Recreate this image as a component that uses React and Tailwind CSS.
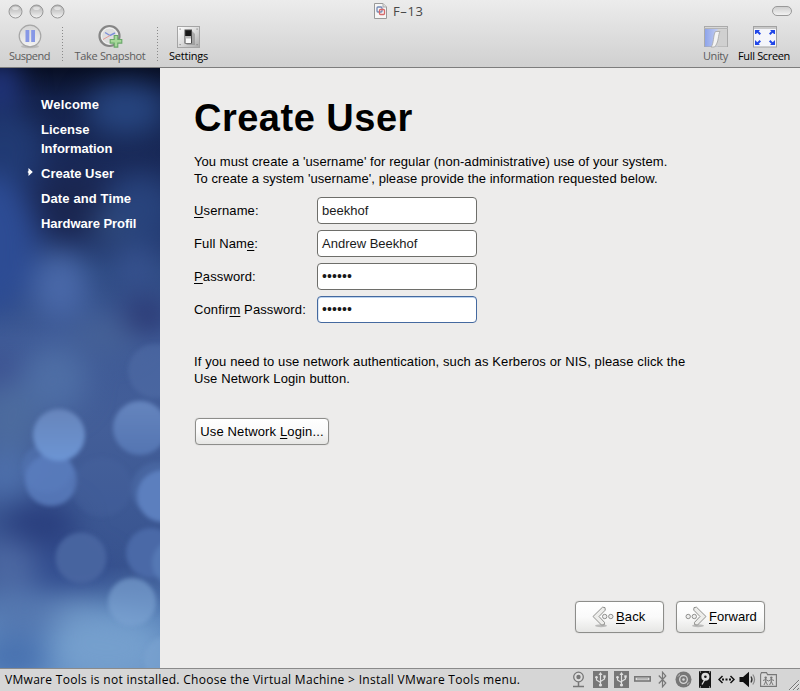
const mac = "font-['Open_Sans','Noto_Sans',sans-serif]";
const gtk = "font-['Liberation_Sans',Arial,sans-serif]";

function WindowButton() {
  return (
    <svg className="h-[15px] w-[15px]" viewBox="0 0 15 15">
      <circle cx="7.5" cy="7.5" r="6.5" fill="url(#lampFill)" stroke="#989898" strokeWidth="1" />
      <ellipse cx="7.5" cy="4.2" rx="3.4" ry="1.8" fill="#fff" opacity=".5" />
    </svg>
  );
}

function ToolItem({ label, dim, width, spacing, children }) {
  return (
    <div className={`flex shrink-0 flex-col items-center ${width}`}>
      <div className="flex h-[25px] items-center justify-center">{children}</div>
      <span className={`text-[11px] leading-[14px] font-medium whitespace-nowrap ${spacing} ${dim ? "text-[#5c5c5c]" : "text-black"}`}>
        {label}
      </span>
    </div>
  );
}

function Separator() {
  return <div className="mt-[3px] h-[34px] w-px shrink-0 bg-[repeating-linear-gradient(to_bottom,#8a8a8a_0_1px,transparent_1px_3px)]" />;
}

function PauseIcon() {
  return (
    <svg className="h-[25px] w-[26px]" viewBox="0 0 26 25">
      <ellipse cx="13" cy="22.5" rx="9" ry="1.8" fill="#bbb" />
      <circle cx="13" cy="12" r="10.8" fill="url(#pauseFill)" stroke="#a6a6a6" strokeWidth="1.2" />
      <rect x="8.5" y="6" width="3.8" height="12" fill="#8798e6" />
      <rect x="14.2" y="6" width="3.8" height="12" fill="#8798e6" />
    </svg>
  );
}

function SnapshotIcon() {
  return (
    <svg className="h-[25px] w-[26px]" viewBox="0 0 26 25">
      <circle cx="12.500" cy="12" r="10" fill="#dedede" stroke="#858585" strokeWidth="2.2" />
      <circle cx="12.500" cy="12" r="8" fill="none" stroke="#f4f4f4" strokeWidth="1" />
      <path d="M8 8.500l5 3 5-2.500" fill="none" stroke="#7d8fd8" strokeWidth="1.4" />
      <path d="M6 15.500l7-4" stroke="#e29a98" />
      <path d="M17.200 11.500h3.600v4h4v3.600h-4v4h-3.600v-4h-4v-3.600h4z" fill="#a7d89a" stroke="#68a868" strokeWidth="1.1" />
    </svg>
  );
}

function SwitchIcon() {
  return (
    <svg className="h-[22px] w-[23px]" viewBox="0 0 23 22">
      <rect x=".5" y=".5" width="22" height="21" fill="url(#plate)" stroke="#a4a4a4" />
      <g fill="#888">
        <rect x="2.500" y="2.500" width="1.200" height="1.200" /><rect x="19.500" y="2.500" width="1.200" height="1.200" />
        <rect x="2.500" y="18" width="1.200" height="1.200" /><rect x="19.500" y="18" width="1.200" height="1.200" />
      </g>
      <path d="M15 5l3 3v11H10l-2-2z" fill="#8a8a8a" opacity=".6" />
      <rect x="7.500" y="3.500" width="7.500" height="14" fill="#4a4a4a" />
      <rect x="8.500" y="4.500" width="5.500" height="5.500" fill="#161616" />
      <rect x="8.500" y="10" width="5.500" height="7" fill="#fafafa" />
      <rect x="8.500" y="10" width="5.500" height="2.500" fill="#b8b8b8" />
    </svg>
  );
}

function UnityIcon() {
  return (
    <svg className="h-[22px] w-[24px]" viewBox="0 0 24 22">
      <rect x=".5" y=".5" width="23" height="20" fill="#d7d7d7" stroke="#aaa" />
      <rect x="1" y="3" width="13" height="17.5" fill="url(#unityBlue)" />
      <path d="M0 2.5h24" stroke="#b4b4b4" />
      <path d="M13.5 3.5h9.5v17H9c3-2 2.5-13 4.500-17z" fill="#d0d0d0" />
      <path d="M11.500 5.500h4.500c-2 3-1 11-5.500 15.500H7c3-3 2-12 4.500-15.500z" fill="#f4f4f4" stroke="#a5a5a5" strokeWidth=".8" />
    </svg>
  );
}

function FullScreenIcon() {
  return (
    <svg className="h-[22px] w-[24px] translate-x-px" viewBox="0 0 24 22">
      <rect x=".5" y=".5" width="23" height="20.500" fill="#f4f5fa" stroke="#a2a2a2" />
      <rect x="1" y="1" width="22" height="2" fill="#c9c9c9" />
      <g fill="#2147e8">
        <path d="M2 4h5L5.700 5.300 8 7.600 6.600 9 4.300 6.700 3 8H2z" />
        <path d="M22 4h-5l1.300 1.300L16 7.600 17.400 9l2.300-2.300L21 8h1z" />
        <path d="M2 19h5l-1.300-1.300L8 15.400 6.600 14l-2.300 2.300L2 14z" />
        <path d="M22 19h-5l1.300-1.300-2.300-2.300 1.400-1.400 2.300 2.300L22 14z" />
      </g>
    </svg>
  );
}

function TitleBar() {
  return (
    <header className={`flex h-[68px] shrink-0 flex-col border-b border-[#7d7d7d] bg-linear-to-b from-[#ececec] to-[#d0d0d0] ${mac}`}>
      <div className="grid h-[24px] shrink-0 grid-cols-[1fr_auto_1fr] items-start pr-[8px] pl-[7.500px]">
        <div className="flex gap-[6px] pt-[3.500px]">
          <WindowButton />
          <WindowButton />
          <WindowButton />
        </div>
        <div className="flex items-start gap-[6px] pt-[3px] pr-[2px]">
          <svg className="h-[16px] w-[13px]" viewBox="0 0 13 16">
            <path d="M.5.5h8.500l3.500 3.500v11.500H.5z" fill="#f6f6f6" stroke="#999" />
            <path d="M9 .5v3.500h3.500" fill="#ddd" stroke="#aaa" />
            <rect x="3" y="4" width="5" height="5" rx="1" fill="none" stroke="#7289b5" strokeWidth="1.300" />
            <rect x="5.500" y="6.500" width="5" height="5" rx="1" fill="none" stroke="#d5696a" strokeWidth="1.300" />
          </svg>
          <span className="text-[13px] leading-[16px] tracking-[0.6px] text-[#484848]">F–13</span>
        </div>
        <div className="mt-[6px] h-[10px] w-[20px] justify-self-end rounded-full border border-[#999] bg-linear-to-b from-[#cfcfcf] to-[#f2f2f2]" />
      </div>
      <div className="flex">
        <ToolItem label="Suspend" dim width="w-[59px]" spacing="tracking-[-0.5px]"><PauseIcon /></ToolItem>
        <div className="w-[3px]" />
        <Separator />
        <ToolItem label="Take Snapshot" dim width="w-[94px]" spacing="tracking-[-0.32px]"><SnapshotIcon /></ToolItem>
        <Separator />
        <ToolItem label="Settings" width="w-[61px]" spacing="tracking-[-0.2px]"><SwitchIcon /></ToolItem>
        <div className="grow" />
        <ToolItem label="Unity" dim width="w-[45px]" spacing="tracking-[-0.4px]"><UnityIcon /></ToolItem>
        <ToolItem label="Full Screen" width="w-[52px]" spacing="tracking-[-0.35px]"><FullScreenIcon /></ToolItem>
        <div className="w-[10px]" />
      </div>
    </header>
  );
}

function Backdrop() {
  return (
    <svg className="absolute inset-0 h-[600px] w-[160px]" viewBox="0 68 160 600" preserveAspectRatio="none">
      <rect y="68" width="160" height="600" fill="url(#night)" />
      <g filter="url(#haze)">
        <ellipse cx="0" cy="85" rx="22" ry="24" fill="#22367f" />
        <ellipse cx="126" cy="110" rx="40" ry="26" fill="#27457f" />
        <ellipse cx="5" cy="150" rx="40" ry="40" fill="#233f7a" opacity=".8" />
        <ellipse cx="75" cy="205" rx="38" ry="34" fill="#1a2650" />
        <ellipse cx="-8" cy="245" rx="44" ry="70" fill="#2d4c94" />
        <ellipse cx="140" cy="210" rx="36" ry="36" fill="#28437c" />
        <ellipse cx="110" cy="225" rx="20" ry="18" fill="#2f4a7c" />
        <ellipse cx="145" cy="316" rx="25" ry="17" fill="#2b3873" />
        <ellipse cx="60" cy="287" rx="28" ry="34" fill="#4968a8" />
        <ellipse cx="136" cy="268" rx="20" ry="22" fill="#37528f" />
        <ellipse cx="105" cy="335" rx="32" ry="18" fill="#456196" />
        <ellipse cx="55" cy="380" rx="32" ry="34" fill="#4e6ea5" />
        <ellipse cx="0" cy="370" rx="16" ry="16" fill="#3c5090" />
        <ellipse cx="10" cy="420" rx="30" ry="38" fill="#4c6b9e" />
        <ellipse cx="5" cy="475" rx="30" ry="24" fill="#4d6fab" />
        <ellipse cx="40" cy="525" rx="38" ry="24" fill="#2a3f7e" />
        <ellipse cx="60" cy="570" rx="50" ry="20" fill="#324d8f" />
        <ellipse cx="8" cy="565" rx="30" ry="26" fill="#4c68a2" />
        <ellipse cx="25" cy="612" rx="38" ry="22" fill="#5578b0" />
        <ellipse cx="75" cy="612" rx="26" ry="16" fill="#668bbd" />
        <ellipse cx="108" cy="648" rx="58" ry="36" fill="#759fcd" />
        <ellipse cx="14" cy="658" rx="36" ry="22" fill="#4871af" />
      </g>
      <g filter="url(#edge)">
        <circle cx="155" cy="371" r="27" fill="#5571aa" opacity=".45" />
        <circle cx="47" cy="468" r="25" fill="#5a7dbe" opacity=".4" />
        <circle cx="51" cy="480" r="26" fill="#5b7ebf" opacity=".8" />
        <circle cx="59" cy="435" r="26" fill="url(#orb)" />
        <circle cx="140" cy="428" r="27" fill="url(#orbSoft)" />
        <circle cx="158" cy="489" r="27" fill="#5677b4" opacity=".35" />
        <circle cx="163" cy="496" r="26" fill="#5c7fbe" />
        <circle cx="102" cy="487" r="30" fill="#4a68a5" opacity=".25" />
        <circle cx="81" cy="558" r="25.500" fill="#4965a0" opacity=".95" />
        <circle cx="151" cy="553" r="25" fill="#4a69a7" />
        <circle cx="176" cy="563" r="24" fill="#577cb8" opacity=".8" />
        <circle cx="132" cy="602" r="24" fill="#7ba2d1" opacity=".65" />
        <circle cx="168" cy="660" r="24" fill="#7ba3d0" opacity=".6" />
      </g>
    </svg>
  );
}

function Sidebar() {
  return (
    <aside className="relative w-[160px] shrink-0 overflow-hidden">
      <Backdrop />
      <nav className={`relative flex w-[150px] flex-col gap-[6px] pt-[27px] pl-[27px] text-[13px] leading-[19px] font-bold whitespace-nowrap text-white ${gtk}`}>
        <div className="pl-[14px] tracking-[0.2px]">Welcome</div>
        <div className="pl-[14px] tracking-[0px]">License<br />Information</div>
        <div className="flex items-center tracking-[0px]">
          <svg className="mr-[8px] h-[8px] w-[6px] -translate-y-[2px]" viewBox="0 0 6 8"><path d="M1.500 0L5.800 4 1.500 8V5L.5 4l1-1z" fill="#fff" /></svg>
          Create User
        </div>
        <div className="pl-[14px] tracking-[0.12px]">Date and Time</div>
        <div className="pl-[14px] tracking-[-0.05px]">Hardware Profil</div>
      </nav>
    </aside>
  );
}

function K({ children }) {
  return <span className="underline decoration-1 underline-offset-2">{children}</span>;
}

function Field({ label, value, focus, secret }) {
  return (
    <div className="flex h-[27px] items-center">
      <div className="w-[123px] tracking-[0.12px] whitespace-nowrap">{label}</div>
      <div
        className={`flex h-[27px] w-[160px] items-center rounded-[4px] border bg-white pl-[4px] text-[#1a1a1a] ${
          focus ? "border-[#44699f] shadow-[inset_0_1px_0_#bdd3ee,inset_1px_0_0_#dce8f5]" : "border-[#6e6e6a]"
        }`}
      >
        {secret ? (
          <span className="text-[14px] tracking-[0.1px]">••••••</span>
        ) : (
          <span>{value}</span>
        )}
      </div>
    </div>
  );
}

const buttonLook = "flex items-center rounded-[4px] border border-[#8d8d8a] bg-linear-to-b from-white via-[#fafafa] to-[#e6e6e4] whitespace-nowrap shadow-[0_0_1px_#aaa]";

function Chevrons({ flip }) {
  return (
    <svg className={`h-[22px] w-[22px] shrink-0 ${flip ? "-scale-x-100" : ""}`} viewBox="0 0 22 22">
      <ellipse cx="9" cy="19.800" rx="6" ry="1.500" fill="#999" opacity=".6" />
      <path d="M10.500 1.200L1 10.500l8.500 8.500 2.800-.3.200-2.300-5.500-5.900 6.300-6.400-.3-2.500z" fill="#ededeb" stroke="#858582" strokeWidth=".9" strokeLinejoin="round" />
      <circle cx="12.700" cy="10.500" r="2.200" fill="#eee" stroke="#858582" strokeWidth=".9" />
      <circle cx="18.800" cy="10.500" r="2.200" fill="#eee" stroke="#858582" strokeWidth=".9" />
    </svg>
  );
}

function Content() {
  return (
    <main className={`flex grow flex-col bg-[#edeceb] pr-[35px] pl-[34px] text-[13px] leading-[17px] text-black ${gtk}`}>
      <h1 className="mt-[27px] text-[38px] leading-[46px] font-bold tracking-[0.5px]">Create User</h1>
      <p className="mt-[12px] tracking-[0.062px] whitespace-nowrap">
        You must create a 'username' for regular (non-administrative) use of your system.
        <br />
        To create a system 'username', please provide the information requested below.
      </p>
      <div className="mt-[10px] flex flex-col gap-[6px]">
        <Field label={<><K>U</K>sername:</>} value="beekhof" />
        <Field label={<>Full Nam<K>e</K>:</>} value="Andrew Beekhof" />
        <Field label={<><K>P</K>assword:</>} secret />
        <Field label={<>Confir<K>m</K> Password:</>} secret focus />
      </div>
      <p className="mt-[30px] tracking-[0.11px] whitespace-nowrap">
        If you need to use network authentication, such as Kerberos or NIS, please click the
        <br />
        Use Network Login button.
      </p>
      <button className={`mt-[31px] ml-px h-[27px] w-[134px] justify-center tracking-[0.14px] ${buttonLook}`}>
        <span>Use Network <K>L</K>ogin...</span>
      </button>
      <div className="mt-auto mb-[35px] flex justify-end gap-[12px]">
        <button className={`h-[32px] w-[89px] gap-[2px] pl-[16px] ${buttonLook}`}>
          <Chevrons />
          <span className="pb-[2px] tracking-[0.14px]"><K>B</K>ack</span>
        </button>
        <button className={`h-[32px] w-[89px] gap-[2px] pl-[8px] ${buttonLook}`}>
          <Chevrons flip />
          <span className="pb-[2px]"><K>F</K>orward</span>
        </button>
      </div>
    </main>
  );
}

function UsbIcon() {
  return (
    <svg className="h-[17px] w-[15px]" viewBox="0 0 15 17">
      <rect width="15" height="17" fill="#777" />
      <g fill="none" stroke="#e0e0e0" strokeWidth="1.200">
        <path d="M7.500 2.500v11M3.500 6.500v2.500l4 2.500M11.500 5.500v2.500l-4 2.500" />
      </g>
      <path d="M7.500 1l2 3h-4z" fill="#e0e0e0" />
      <circle cx="7.500" cy="14" r="1.600" fill="#e0e0e0" />
      <circle cx="3.500" cy="6.200" r="1.300" fill="#e0e0e0" />
      <rect x="10.300" y="4.300" width="2.400" height="2.400" fill="#e0e0e0" />
    </svg>
  );
}

function StatusBar() {
  return (
    <footer className={`flex h-[23px] shrink-0 items-center border-t border-[#8a8a8a] bg-[#d6d6d6] pl-[5px] ${mac}`}>
      <span className="w-[565px] text-[12px] leading-[16px] font-medium tracking-[0.3px] whitespace-nowrap text-black">
        VMware Tools is not installed. Choose the Virtual Machine &gt; Install VMware Tools menu.
      </span>
      <div className="flex -translate-y-px items-center">
        <svg className="ml-[2px] h-[17px] w-[13px]" viewBox="0 0 13 17">
          <circle cx="6.500" cy="6" r="4.800" fill="#ddd" stroke="#777" strokeWidth="1.300" />
          <circle cx="6.500" cy="6" r="2.200" fill="#777" />
          <path d="M6.500 11v4M1 15.500h11" stroke="#777" strokeWidth="1.500" />
        </svg>
        <span className="w-[8px]" />
        <UsbIcon />
        <span className="w-[6px]" />
        <UsbIcon />
        <svg className="ml-[5px] h-[6px] w-[17px]" viewBox="0 0 17 6">
          <rect x=".8" y=".8" width="15.400" height="4.200" fill="#ddd" stroke="#777" strokeWidth="1.600" />
          <path d="M3 2.900h11" stroke="#999" />
        </svg>
        <svg className="ml-[7px] h-[17px] w-[9px]" viewBox="0 0 9 17">
          <path d="M.8 4.500l7 7.500-3.300 3.800V1.200L7.800 5l-7 7.500" fill="none" stroke="#777" strokeWidth="1.200" />
        </svg>
        <svg className="ml-[8px] h-[17px] w-[17px]" viewBox="0 0 17 17">
          <circle cx="8.500" cy="8.500" r="8" fill="#777" />
          <circle cx="8.500" cy="8.500" r="3.800" fill="none" stroke="#d6d6d6" strokeWidth="1.300" />
          <circle cx="8.500" cy="8.500" r="1.300" fill="#d6d6d6" />
          <path d="M3 5.500a6 6 0 012-2M14 11.500a6 6 0 01-2 2" stroke="#c6c6c6" fill="none" />
        </svg>
        <svg className="ml-[7px] h-[17px] w-[12px]" viewBox="0 0 12 17">
          <rect width="12" height="17" rx="1" fill="#161616" />
          <circle cx="6.400" cy="5.800" r="4" fill="#ddd" />
          <circle cx="6.400" cy="5.800" r="1.300" fill="#161616" />
          <path d="M3 13.500l3.500-6" stroke="#ddd" strokeWidth="1.300" />
          <path d="M1 1h1M10 1h1M1 16h1M10 16h1" stroke="#ddd" />
        </svg>
        <svg className="ml-[7px] h-[9px] w-[17px]" viewBox="0 0 17 9">
          <path d="M4.500 1L1 4.500 4.500 8M12.500 1L16 4.500 12.500 8" fill="none" stroke="#111" strokeWidth="1.500" />
          <path d="M4 4.500h2M7.500 4.500h2M11 4.500h2" stroke="#111" strokeWidth="1.800" />
        </svg>
        <svg className="ml-[4px] h-[17px] w-[17px]" viewBox="0 0 17 17">
          <path d="M.5 6h3.500L10 .8v15.400L4 11H.5z" fill="#111" />
          <path d="M12 5.500q2 3 0 6" fill="none" stroke="#333" strokeWidth="1.300" />
          <path d="M13.800 3.500q3.500 5 0 10" fill="none" stroke="#888" strokeWidth="1.200" />
        </svg>
        <svg className="ml-[4px] h-[15px] w-[17px]" viewBox="0 0 17 15">
          <path d="M.6 14.400V2.500L1.500.6h5l1 2h8.900v11.800z" fill="#dadada" stroke="#777" strokeWidth="1.100" />
          <circle cx="5.700" cy="5.600" r="1.200" fill="#777" /><circle cx="11.300" cy="5.600" r="1.200" fill="#777" />
          <path d="M5.700 6v4M5.700 9.500L4 13M5.700 9.500L7.500 13M3 8.500l2.700-1L8.500 9M11.300 6v4M11.300 9.500L9.600 13M11.300 9.500L13 13M8.500 9l2.800-1.500L14 8.500" fill="none" stroke="#777" />
        </svg>
      </div>
      <svg className="ml-auto h-[12px] w-[12px] self-end" viewBox="0 0 12 12">
        <path d="M1 11L11 1M5 11l6-6M9 11l2-2" stroke="#777" />
        <path d="M2.200 11L12 1.200M6.200 11L12 5.200" stroke="#f2f2f2" strokeWidth=".7" />
      </svg>
    </footer>
  );
}

function Paints() {
  return (
    <svg className="absolute h-0 w-0" aria-hidden="true">
      <defs>
        <linearGradient id="lampFill" x2="0" y2="1"><stop stopColor="#b0b0b0" /><stop offset=".5" stopColor="#d0d0d0" /><stop offset="1" stopColor="#f5f5f5" /></linearGradient>
        <linearGradient id="pauseFill" x2="0" y2="1"><stop stopColor="#d5d5d5" /><stop offset="1" stopColor="#f3f3f3" /></linearGradient>
        <linearGradient id="plate" x2="1" y2="1"><stop stopColor="#fff" /><stop offset=".5" stopColor="#dcdcdc" /><stop offset="1" stopColor="#a8a8a8" /></linearGradient>
        <linearGradient id="unityBlue" x2="1" y2="0"><stop stopColor="#8ea4ea" /><stop offset="1" stopColor="#c3cef2" /></linearGradient>
        <linearGradient id="night" x2="0" y2="1">
          <stop stopColor="#080f24" />
          <stop offset=".05" stopColor="#13214a" />
          <stop offset=".25" stopColor="#1e3064" />
          <stop offset=".34" stopColor="#2e4a82" />
          <stop offset=".45" stopColor="#3f5b97" />
          <stop offset=".6" stopColor="#435e98" />
          <stop offset=".72" stopColor="#3d5994" />
          <stop offset=".83" stopColor="#38538f" />
          <stop offset=".92" stopColor="#5b84ba" />
          <stop offset="1" stopColor="#6591c6" />
        </linearGradient>
        <linearGradient id="orb" x2="0" y2="1"><stop stopColor="#6785bb" /><stop offset="1" stopColor="#6c95d4" /></linearGradient>
        <linearGradient id="orbSoft" x2="0" y2="1"><stop stopColor="#6585be" /><stop offset="1" stopColor="#5475b2" /></linearGradient>
        <filter id="haze" x="-50%" y="-20%" width="200%" height="140%" colorInterpolationFilters="sRGB"><feGaussianBlur stdDeviation="14" /></filter>
        <filter id="edge" x="-20%" y="-20%" width="140%" height="140%" colorInterpolationFilters="sRGB"><feGaussianBlur stdDeviation="1.900" /></filter>
      </defs>
    </svg>
  );
}

export default function App() {
  return (
    <div className="relative flex h-[691px] w-[800px] flex-col overflow-hidden">
      <Paints />
      <TitleBar />
      <div className="flex h-[600px] shrink-0">
        <Sidebar />
        <Content />
      </div>
      <StatusBar />
    </div>
  );
}
